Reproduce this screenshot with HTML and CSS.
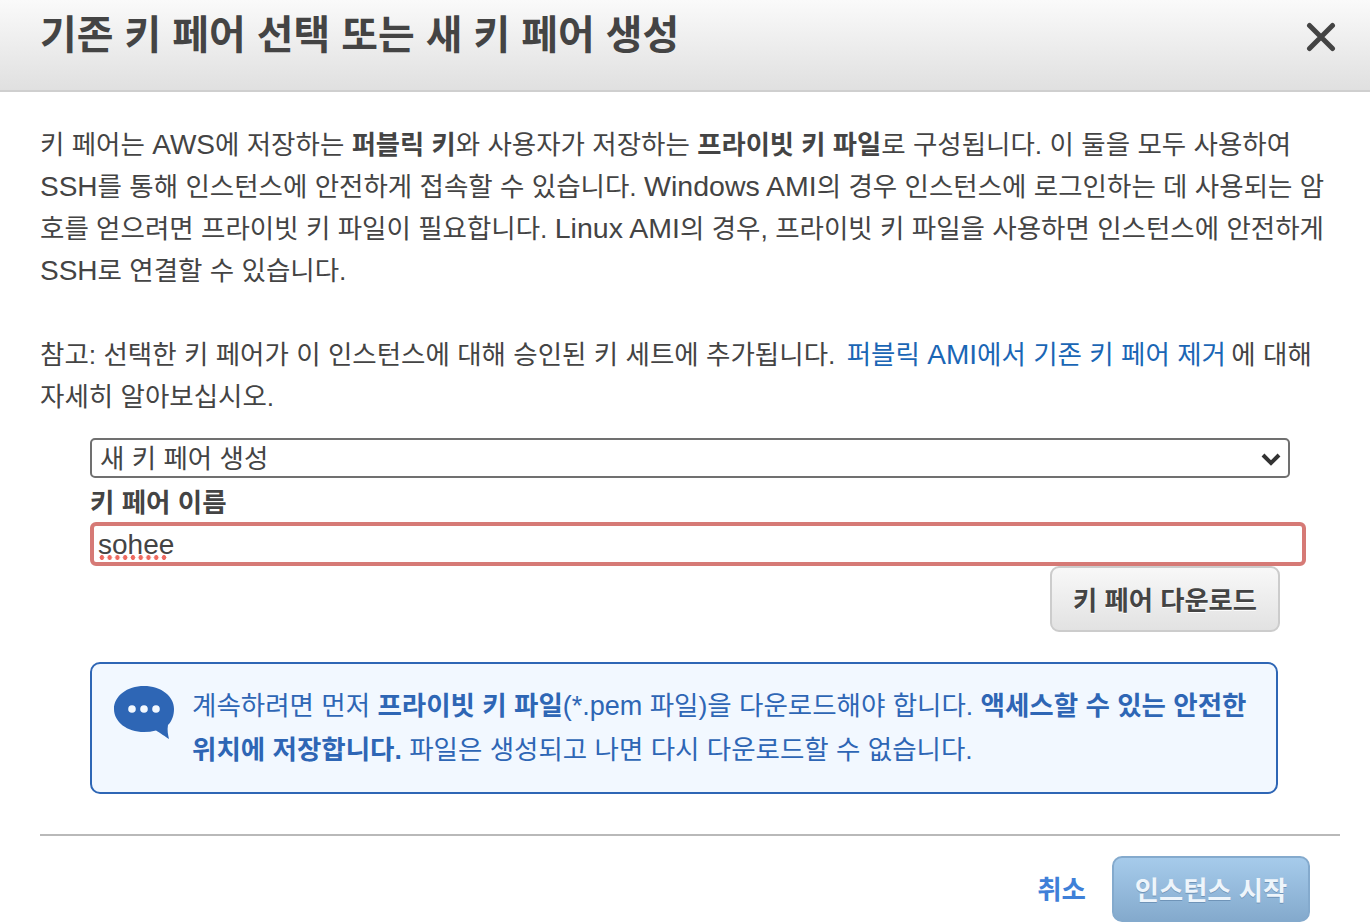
FILE: index.html
```html
<!DOCTYPE html>
<html lang="ko">
<head>
<meta charset="utf-8">
<title>기존 키 페어 선택 또는 새 키 페어 생성</title>
<link rel="stylesheet" href="styles.css">
</head>
<body>
<header class="head">
  <h1 class="title">기존 키 페어 선택 또는 새 키 페어 생성</h1>
  <svg class="close" width="30" height="30" viewBox="0 0 30 30"><path d="M3.5 3.5L26.5 26.5M26.5 3.5L3.5 26.5" fill="none" stroke="#444" stroke-width="5" stroke-linecap="round"/></svg>
</header>
<main class="body">
  <p class="para">키 페어는 <span class="lat">AWS</span>에 저장하는 <b>퍼블릭 키</b>와 사용자가 저장하는 <b>프라이빗 키 파일</b>로 구성됩니다. 이 둘을 모두 사용하여<br><span class="lat">SSH</span>를 통해 인스턴스에 안전하게 접속할 수 있습니다. <span class="lat wide">Windows AMI</span>의 경우 인스턴스에 로그인하는 데 사용되는 암<br>호를 얻으려면 프라이빗 키 파일이 필요합니다. <span class="lat wide">Linux AMI</span>의 경우, 프라이빗 키 파일을 사용하면 인스턴스에 안전하게<br><span class="lat">SSH</span>로 연결할 수 있습니다.</p>
  <p class="para note">참고: 선택한 키 페어가 이 인스턴스에 대해 승인된 키 세트에 추가됩니다. <a class="link" href="#">퍼블릭 <span class="lat">AMI</span>에서 기존 키 페어 제거</a> 에 대해<br>자세히 알아보십시오.</p>
  <div class="form">
    <div class="select">
      <span>새 키 페어 생성</span>
      <svg width="22" height="14" viewBox="0 0 22 14"><path d="M3 3L11 11L19 3" fill="none" stroke="#333" stroke-width="4"/></svg>
    </div>
    <label class="label">키 페어 이름</label>
    <div class="input"><span class="typed">sohee</span></div>
    <div class="dl-row"><button class="btn">키 페어 다운로드</button></div>
    <div class="info">
      <svg class="bubble" width="64" height="56" viewBox="0 0 64 56">
        <path d="M32 2C15 2 2 12 2 25C2 38 15 48 32 48C36 48 40 47.5 44 46.5C48 49 54 53 57 55C56 51 55 46 56 41C60 37 62 31 62 25C62 12 49 2 32 2Z" fill="#2e66b5"/>
        <circle cx="20" cy="25" r="3.8" fill="#f2f8ff"/><circle cx="32" cy="25" r="3.8" fill="#f2f8ff"/><circle cx="44" cy="25" r="3.8" fill="#f2f8ff"/>
      </svg>
      <p class="info-text">계속하려면 먼저 <b>프라이빗 키 파일</b><span class="pem">(*.pem</span> 파일)을 다운로드해야 합니다. <b>액세스할 수 있는 안전한<br>위치에 저장합니다.</b> 파일은 생성되고 나면 다시 다운로드할 수 없습니다.</p>
    </div>
  </div>
  <footer class="foot">
    <a class="cancel" href="#">취소</a>
    <button class="launch">인스턴스 시작</button>
  </footer>
</main>
</body>
</html>
```
FILE: styles.css
```css
* { box-sizing: border-box; }
html, body { margin: 0; height: 924px; overflow: hidden; background: #fff; }
body { font-family: "Liberation Sans", "Noto Sans CJK KR", sans-serif; color: #444; font-size: 26.5px; }
.lat { font-size: 28px; line-height: 1; }
.wide { font-size: 28.5px; }
.pem { font-size: 27px; line-height: 1; }
.head {
  height: 92px;
  display: flex;
  justify-content: space-between;
  padding: 0 34px 0 40px;
  background: linear-gradient(#fafafa, #e0e0e0);
  border-bottom: 2px solid #cfcfcf;
}
.title { margin: 9px 0 0; font-size: 39.9px; line-height: 52px; font-weight: 700; color: #444; }
.close { margin-top: 22px; }
.body { padding: 32px 30px 0 40px; }
.para { margin: 0; height: auto; line-height: 42px; white-space: nowrap; }
.para b { font-size: 26.3px; line-height: 1; }
.note { margin-top: 42px; }
.link { color: #1a66b5; text-decoration: none; margin: 0 -2px 0 4px; }
.form { margin: 20px 0 0 50px; }
.select {
  width: 1200px; height: 40px;
  display: flex; align-items: center; justify-content: space-between;
  padding: 2px 6px 0 8px;
  border: 2px solid #707070; border-radius: 5px;
  line-height: 36px;
}
.label { display: block; height: 44px; font-weight: 700; line-height: 50px; }
.input {
  width: 1216px; height: 44px;
  padding-left: 4px;
  border: 4px solid #d67a76; border-radius: 6px;
  font-size: 28px;
  line-height: 38px;
}
.typed { display: inline-block; position: relative; line-height: 38px; }
.typed::after {
  content: "";
  position: absolute;
  left: 0; bottom: 4px;
  width: 70px; height: 5px;
  background: radial-gradient(circle at center, #ee6a60 2.2px, transparent 2.6px) left center / 7.77px 5px repeat-x;
}
.dl-row { display: flex; justify-content: flex-end; width: 1190px; }
.btn {
  width: 230px; height: 66px;
  font: 700 26.3px "Liberation Sans", "Noto Sans CJK KR", sans-serif; color: #444;
  background: linear-gradient(#f8f8f8, #e2e2e2);
  border: 2px solid #cccccc; border-radius: 9px;
  text-shadow: 0 1px 0 #fff;
  padding: 0 0 2px;
}
.info {
  width: 1188px; height: 132px;
  margin-top: 30px;
  display: flex;
  padding: 20px 10px 0 20px;
  background: #f2f8ff;
  border: 2px solid #2e66b5; border-radius: 10px;
  color: #2e66b5;
}
.bubble { flex: none; margin-right: 16px; }
.info-text { margin: 0; line-height: 44px; white-space: nowrap; }
.foot {
  width: 1300px;
  margin-top: 40px;
  padding: 20px 30px 0 0;
  border-top: 2px solid #b9b9b9;
  display: flex; justify-content: flex-end; align-items: center; gap: 26px;
}
.cancel { color: #3f80d8; font-weight: 700; text-decoration: none; padding-bottom: 3px; }
.launch {
  width: 198px; height: 66px;
  font: 700 26.3px "Liberation Sans", "Noto Sans CJK KR", sans-serif; color: #eef5fb;
  background: linear-gradient(#a6cbeb, #84aacd);
  border: 2px solid #84aacd; border-radius: 10px;
  text-shadow: 0 1px 0 #6f94b8;
  padding: 0 0 2px;
}
```
